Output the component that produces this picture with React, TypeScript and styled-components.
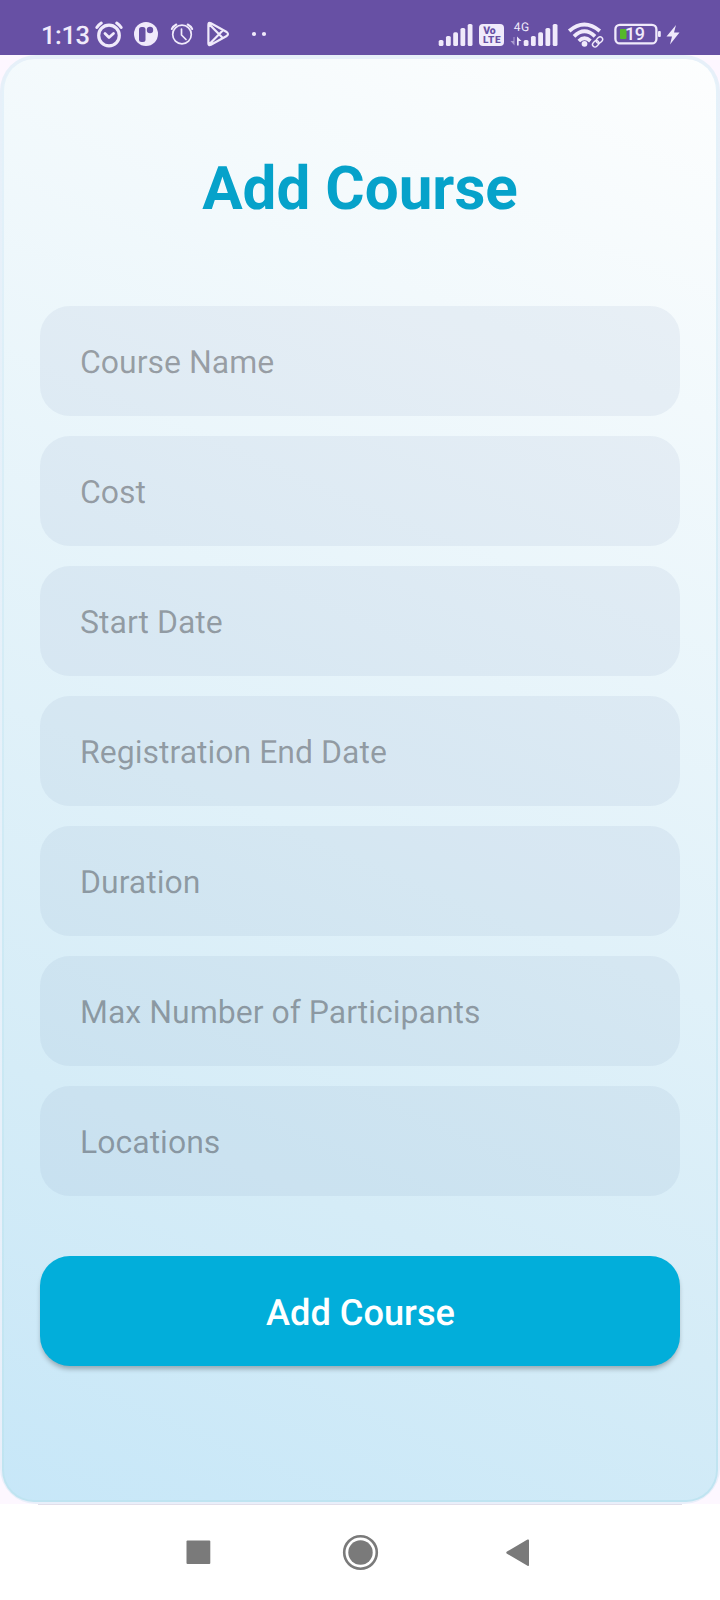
import React from "react";
import styled, { createGlobalStyle } from "styled-components";

const GlobalStyle = createGlobalStyle`
  * { box-sizing: border-box; }
  body { margin: 0; background: #fff; font-family: Roboto, "Noto Sans", sans-serif; text-rendering: geometricPrecision; }
`;

const Screen = styled.div`
  width: 720px;
  height: 1600px;
  display: flex;
  flex-direction: column;
  background: #fff;
  overflow: hidden;
`;

const StatusBar = styled.header`
  height: 55px;
  flex: none;
  background: #6750a4;
  color: #f0eafb;
`;

const StatusArt = styled.svg`
  display: block;
`;

const Page = styled.div`
  flex: none;
  height: 1449px;
  background: #fdf7ff;
  display: flex;
`;

const Rim = styled.main`
  flex: 1;
  display: flex;
  padding: 4px 2px 2px;
  border-radius: 36px;
  background: linear-gradient(180deg, #e7f0f9, #e6f1fa 60%, #e9effa);
`;

const Card = styled.form`
  flex: 1;
  padding: 83px 36px 0;
  border: 2px solid transparent;
  border-top: 0;
  border-radius: 32px;
  background:
    linear-gradient(23deg, #c7e7f8, #d5ecf7 25%, #fdfefe) padding-box,
    linear-gradient(180deg, #e6f2fa, #d9eef7 30%, #bfe4f1) border-box;
  display: flex;
  flex-direction: column;
`;

const Title = styled.h1`
  margin: 0;
  height: 94px;
  line-height: 94px;
  text-align: center;
  font-size: 60.2px;
  font-weight: 700;
  color: #06a2ca;
`;

const Fields = styled.div`
  margin-top: 70px;
  display: flex;
  flex-direction: column;
  gap: 20px;
`;

const Field = styled.input`
  display: block;
  width: 100%;
  height: 110px;
  padding: 2px 40px 0;
  border: 0;
  outline: 0;
  border-radius: 30px;
  background: rgba(70, 95, 150, 0.07);
  font: 400 32px Roboto, sans-serif;
  text-rendering: geometricPrecision;
  color: #333;
  &::placeholder { color: rgba(29, 27, 32, 0.38); opacity: 1; }
`;

const Submit = styled.button`
  margin-top: 60px;
  height: 110px;
  flex: none;
  padding: 3px 0 0 1px;
  border: 0;
  border-radius: 30px;
  background: #02aeda;
  color: #fff;
  font: 500 36.2px Roboto, sans-serif;
  text-rendering: geometricPrecision;
  box-shadow: 0 4px 5px -1px rgba(0, 0, 0, 0.28);
`;

const NavBar = styled.nav`
  flex: 1;
  background: #fff;
  display: flex;
  flex-direction: column;
  align-items: center;
`;

const NavEdge = styled.div`
  width: 644px;
  height: 1px;
  background: #e2dfea;
`;

const FIELDS = [
  "Course Name",
  "Cost",
  "Start Date",
  "Registration End Date",
  "Duration",
  "Max Number of Participants",
  "Locations",
];

const INK = "#f0eafb";

function SignalBars({ x }: { x: number }) {
  return (
    <g fill={INK}>
      {[6, 10, 13.7, 18, 22].map((h, i) => (
        <rect key={h} x={x + i * 7.25} y={46 - h} width="4.8" height={h} rx="1.6" />
      ))}
    </g>
  );
}

function StatusIcons() {
  return (
    <StatusArt width="720" height="55" viewBox="0 0 720 55" fontFamily="Roboto, sans-serif">
      <text x="41" y="44" fontSize="25.5" fontWeight="500" fill={INK} textLength="49">1:13</text>
      <g fill="none" stroke={INK} strokeLinecap="round">
        <circle cx="109" cy="35.5" r="10.3" strokeWidth="3.2" />
        <path d="M105 33.5l4 4 4.500-4" strokeWidth="2.8" strokeLinejoin="round" />
        <path d="M96.8 27.5q1.500-2.500 4.500-4.500M121.200 27.500q-1.500-2.500-4.500-4.500" strokeWidth="3" />
        <circle cx="182" cy="34.5" r="9.3" strokeWidth="1.7" />
        <path d="M181.5 29v6l4.500 4.500" strokeWidth="1.700" />
        <path d="M171.8 29q1.500-3 4.500-4.500M192.200 29q-1.500-3-4.500-4.500" strokeWidth="2" />
        <path d="M208.4 25v18.500q0 2.500 2.500 1.300l15.800-8.800q2.500-2 0-4l-15.800-8.800q-2.500-1.300-2.500 1.800zM209.500 24.500l13 13.300M209.500 44l13-13.300" strokeWidth="2.200" strokeLinejoin="round" />
      </g>
      <circle cx="146" cy="34" r="12" fill={INK} />
      <rect x="139" y="27" width="6.5" height="15" rx="2.5" fill="#6750a4" />
      <circle cx="150" cy="30" r="3.2" fill="#6750a4" />
      <circle cx="254" cy="34" r="2.1" fill={INK} />
      <circle cx="264" cy="34" r="2.1" fill={INK} />

      <SignalBars x={438.7} />
      <rect x="479" y="24" width="25" height="22" rx="4" fill={INK} />
      <text x="483.2" y="34.2" fontSize="10.5" fontWeight="900" fill="#6750a4" textLength="12.5">Vo</text>
      <text x="483" y="43.3" fontSize="10" fontWeight="900" fill="#6750a4" textLength="17.5">LTE</text>
      <text x="513.8" y="31.2" fontSize="12" fill={INK} textLength="15.5">4G</text>
      <path d="M514.5 37v8.500l-4-4.500h3v-4z" fill={INK} opacity=".5" />
      <path d="M517 45.5v-9l4.500 4.500h-2.800v4.500z" fill={INK} />
      <SignalBars x={523.7} />
      <g fill="none" stroke={INK} strokeWidth="3.8">
        <path d="M569.2 31q15-13 30.600 0" />
        <path d="M574 36.3q10.500-10 21 0" />
        <path d="M578.8 41q5.700-5.500 11.600 0" />
      </g>
      <circle cx="584.5" cy="43.8" r="2.9" fill={INK} />
      <g fill="none" stroke={INK} strokeWidth="1.4" transform="rotate(-45 597.5 42)">
        <rect x="591.5" y="39.5" width="7" height="5" rx="2.5" />
        <rect x="596.7" y="39.5" width="7" height="5" rx="2.5" />
      </g>
      <rect x="615.4" y="24.8" width="41" height="18.6" rx="4.5" fill="none" stroke={INK} strokeWidth="2.3" />
      <rect x="620" y="29" width="6.5" height="10" rx="1" fill="#55b82a" />
      <text x="625" y="40.3" fontSize="18" fontWeight="500" fill={INK} textLength="20">19</text>
      <rect x="658" y="31" width="2.8" height="6" rx="1" fill={INK} />
      <path d="M676 25l-9.500 11.500h5.500l-2 8 9.500-12h-5.500z" fill={INK} />
    </StatusArt>
  );
}

export default function App() {
  return (
    <Screen>
      <GlobalStyle />
      <StatusBar><StatusIcons /></StatusBar>
      <Page>
        <Rim>
          <Card onSubmit={(e: React.FormEvent) => e.preventDefault()}>
            <Title>Add Course</Title>
            <Fields>
              {FIELDS.map((name) => <Field key={name} placeholder={name} />)}
            </Fields>
            <Submit type="submit">Add Course</Submit>
          </Card>
        </Rim>
      </Page>
      <NavBar>
        <NavEdge />
        <svg width="720" height="95" viewBox="0 1505 720 95" fill="#7a7a7a">
          <rect x="186.5" y="1540.5" width="23.8" height="23.5" rx="1" />
          <circle cx="360.5" cy="1552.5" r="12.2" />
          <circle cx="360.5" cy="1552.5" r="16.3" fill="none" stroke="#7a7a7a" strokeWidth="2.6" />
          <path d="M507 1551.6l20.500-12q1.500-.7 1.500.8v24.500q0 1.500-1.500.8l-20.500-12q-1.500-1 0-2.100z" />
        </svg>
      </NavBar>
    </Screen>
  );
}
